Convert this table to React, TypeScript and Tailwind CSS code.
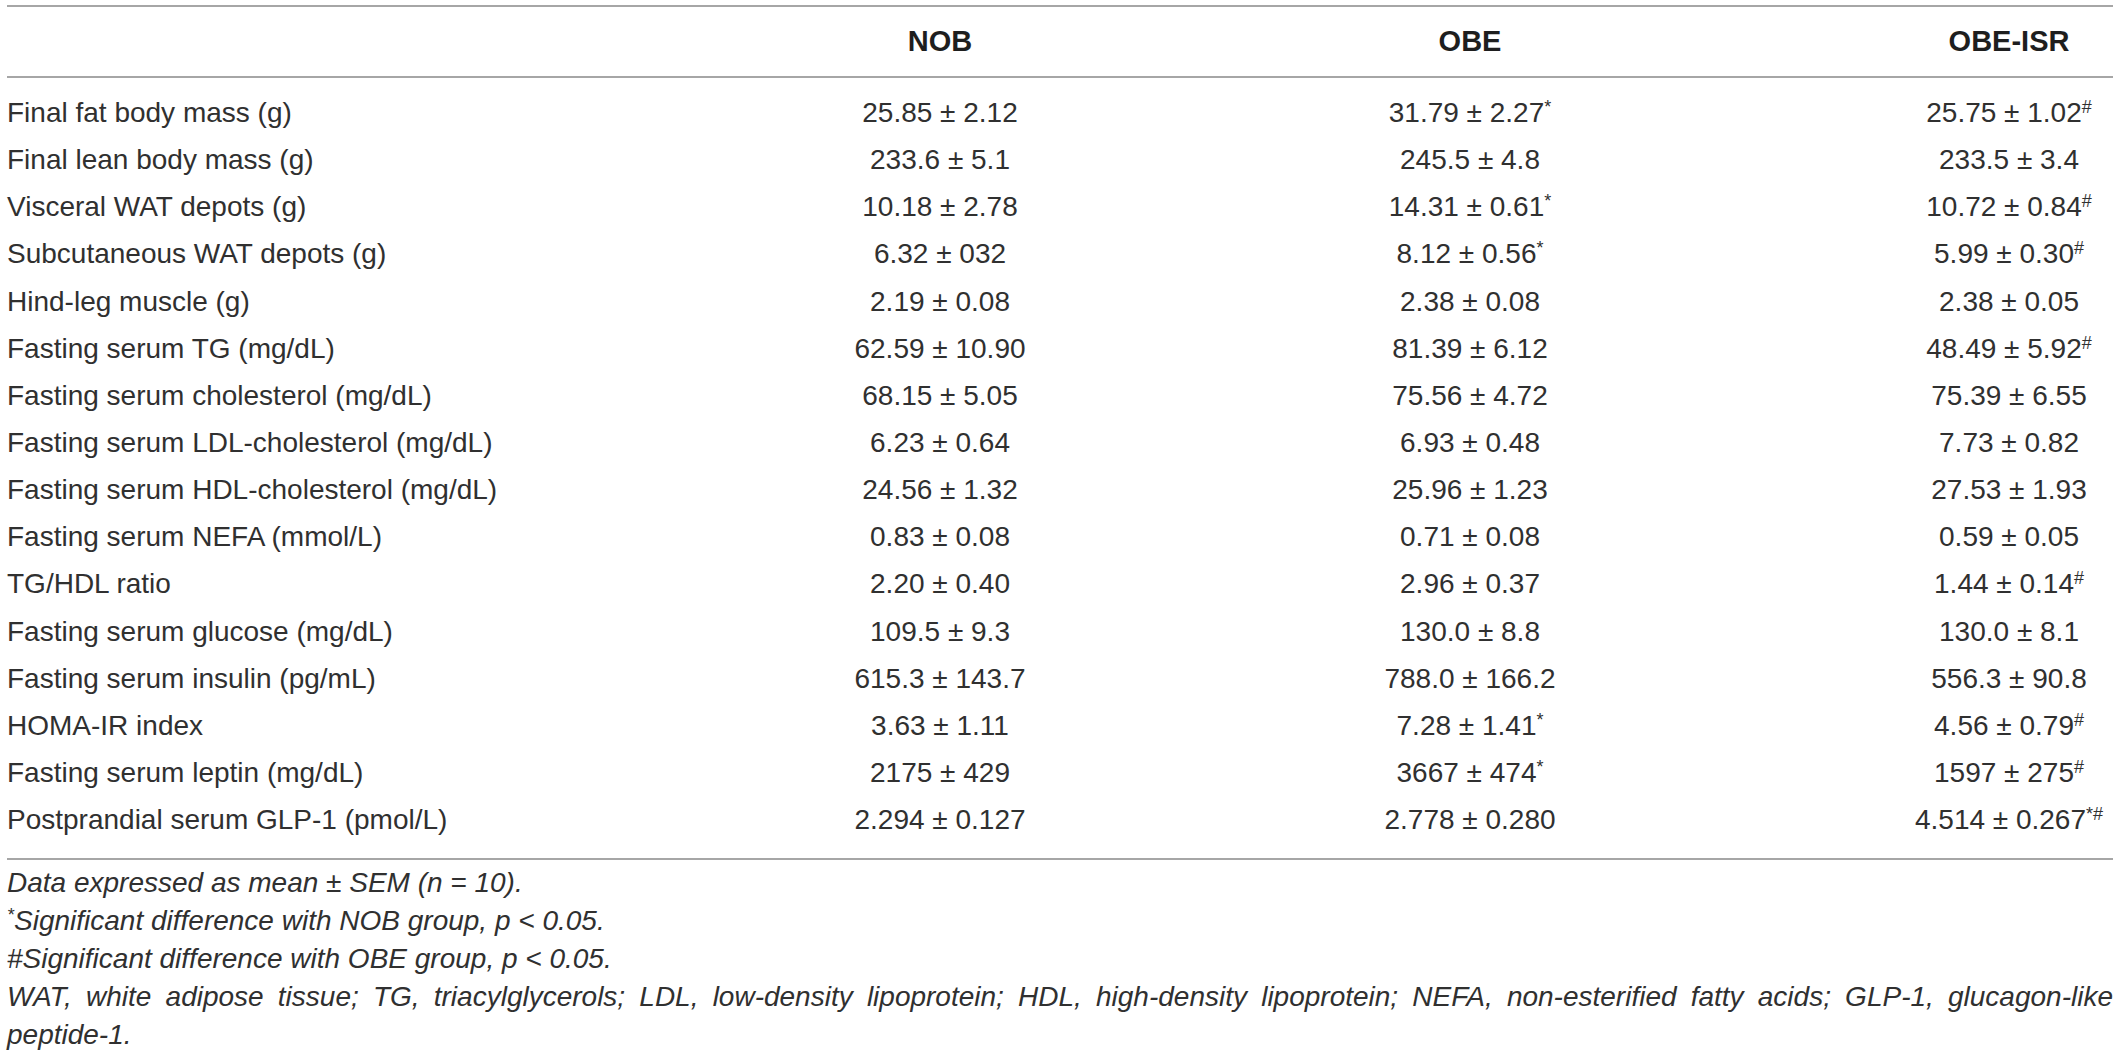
type Row = { label: string; nob: string; obe: string; obeSup?: string; isr: string; isrSup?: string };

const rows: Row[] = [
  { label: "Final fat body mass (g)", nob: "25.85 ± 2.12", obe: "31.79 ± 2.27", obeSup: "*", isr: "25.75 ± 1.02", isrSup: "#" },
  { label: "Final lean body mass (g)", nob: "233.6 ± 5.1", obe: "245.5 ± 4.8", isr: "233.5 ± 3.4" },
  { label: "Visceral WAT depots (g)", nob: "10.18 ± 2.78", obe: "14.31 ± 0.61", obeSup: "*", isr: "10.72 ± 0.84", isrSup: "#" },
  { label: "Subcutaneous WAT depots (g)", nob: "6.32 ± 032", obe: "8.12 ± 0.56", obeSup: "*", isr: "5.99 ± 0.30", isrSup: "#" },
  { label: "Hind-leg muscle (g)", nob: "2.19 ± 0.08", obe: "2.38 ± 0.08", isr: "2.38 ± 0.05" },
  { label: "Fasting serum TG (mg/dL)", nob: "62.59 ± 10.90", obe: "81.39 ± 6.12", isr: "48.49 ± 5.92", isrSup: "#" },
  { label: "Fasting serum cholesterol (mg/dL)", nob: "68.15 ± 5.05", obe: "75.56 ± 4.72", isr: "75.39 ± 6.55" },
  { label: "Fasting serum LDL-cholesterol (mg/dL)", nob: "6.23 ± 0.64", obe: "6.93 ± 0.48", isr: "7.73 ± 0.82" },
  { label: "Fasting serum HDL-cholesterol (mg/dL)", nob: "24.56 ± 1.32", obe: "25.96 ± 1.23", isr: "27.53 ± 1.93" },
  { label: "Fasting serum NEFA (mmol/L)", nob: "0.83 ± 0.08", obe: "0.71 ± 0.08", isr: "0.59 ± 0.05" },
  { label: "TG/HDL ratio", nob: "2.20 ± 0.40", obe: "2.96 ± 0.37", isr: "1.44 ± 0.14", isrSup: "#" },
  { label: "Fasting serum glucose (mg/dL)", nob: "109.5 ± 9.3", obe: "130.0 ± 8.8", isr: "130.0 ± 8.1" },
  { label: "Fasting serum insulin (pg/mL)", nob: "615.3 ± 143.7", obe: "788.0 ± 166.2", isr: "556.3 ± 90.8" },
  { label: "HOMA-IR index", nob: "3.63 ± 1.11", obe: "7.28 ± 1.41", obeSup: "*", isr: "4.56 ± 0.79", isrSup: "#" },
  { label: "Fasting serum leptin (mg/dL)", nob: "2175 ± 429", obe: "3667 ± 474", obeSup: "*", isr: "1597 ± 275", isrSup: "#" },
  { label: "Postprandial serum GLP-1 (pmol/L)", nob: "2.294 ± 0.127", obe: "2.778 ± 0.280", isr: "4.514 ± 0.267", isrSup: "*#" },
];

function Sup({ s }: { s?: string }) {
  if (!s) return null;
  return <sup className="text-[18px]">{s}</sup>;
}

export default function App() {
  return (
    <div className="w-[2119px] min-h-[1056px] bg-white pl-[7px] pr-[6px] pt-[5px] font-['Liberation_Sans',Arial,sans-serif] text-[28px] text-[#303030]">
      {/* header */}
      <div className="grid h-[73px] grid-cols-[668px_530px_530px_1fr] items-center border-y-2 border-[#a6a6a6] font-['Liberation_Sans_Narrow','Liberation_Sans',Arial,sans-serif] text-[29px] font-bold text-[#1e1e1e]">
        <div />
        <div className="text-center">NOB</div>
        <div className="text-center">OBE</div>
        <div className="w-[208px] justify-self-end text-center">OBE-ISR</div>
      </div>

      {/* body */}
      <div className="border-b-2 border-[#a6a6a6] pt-[11.5px] pb-[14px]">
        {rows.map((r) => (
          <div key={r.label} className="grid h-[47.15px] grid-cols-[668px_530px_530px_1fr] items-center whitespace-nowrap">
            <div>{r.label}</div>
            <div className="text-center">{r.nob}</div>
            <div className="text-center">
              {r.obe}
              <Sup s={r.obeSup} />
            </div>
            <div className="w-[208px] justify-self-end text-center">
              {r.isr}
              <Sup s={r.isrSup} />
            </div>
          </div>
        ))}
      </div>

      {/* notes */}
      <div className="pt-[4px] italic leading-[38px]">
        <p>Data expressed as mean ± SEM (n = 10).</p>
        <p>
          <sup className="text-[18px]">*</sup>Significant difference with NOB group, p &lt; 0.05.
        </p>
        <p>#Significant difference with OBE group, p &lt; 0.05.</p>
        <p className="text-justify [text-align-last:justify]">
          WAT, white adipose tissue; TG, triacylglycerols; LDL, low-density lipoprotein; HDL, high-density lipoprotein; NEFA, non-esterified fatty acids; GLP-1, glucagon-like
        </p>
        <p>peptide-1.</p>
      </div>
    </div>
  );
}
